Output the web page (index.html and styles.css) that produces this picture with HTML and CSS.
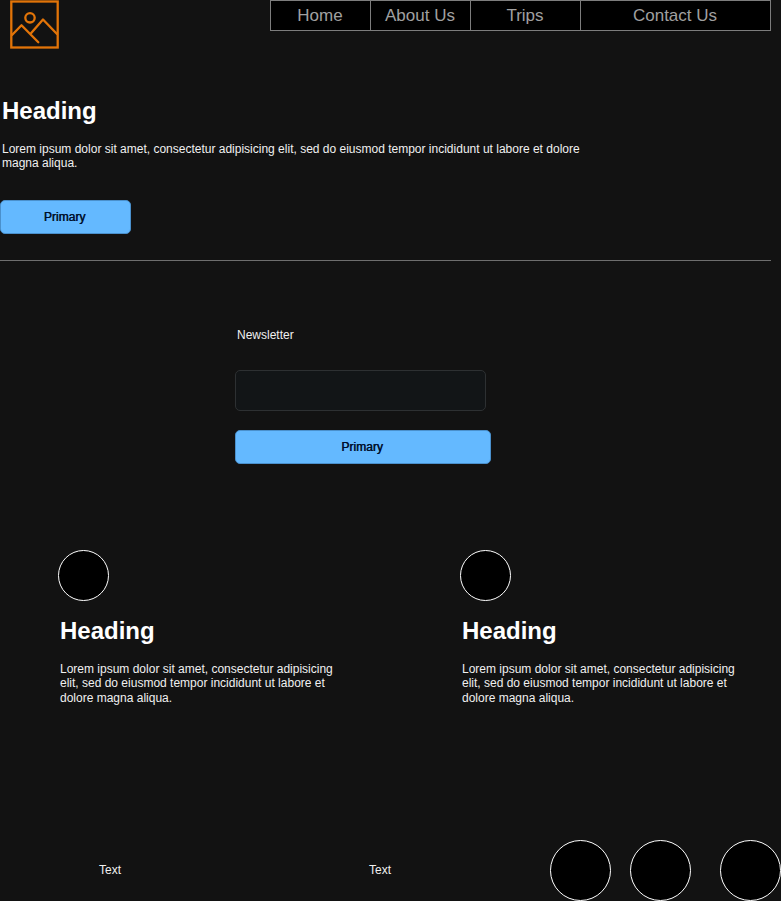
FILE: index.html
```html
<!DOCTYPE html>
<html lang="en">
<head>
<meta charset="utf-8">
<title>Trips</title>
<link rel="stylesheet" href="styles.css">
</head>
<body>
<header class="header">
  <svg class="logo" viewBox="0 0 50 50" fill="none" stroke="#e27408" stroke-width="2.3" stroke-linecap="round" stroke-linejoin="round">
    <rect x="1.3" y="1.5" width="46.4" height="46" stroke-linejoin="miter"/>
    <circle cx="20" cy="17.8" r="4.7"/>
    <path d="M2 35L11.5 25.3L28.3 42.3M21 33.3L33 19.5L47 34"/>
  </svg>
  <nav class="nav">
    <a>Home</a><a>About Us</a><a>Trips</a><a>Contact Us</a>
  </nav>
</header>
<section class="hero">
  <h1>Heading</h1>
  <p>Lorem ipsum dolor sit amet, consectetur adipisicing elit, sed do eiusmod tempor incididunt ut labore et dolore magna aliqua.</p>
  <button class="button">Primary</button>
</section>
<form class="newsletter">
  <label for="email">Newsletter</label>
  <input id="email" type="text">
  <button class="button" type="button">Primary</button>
</form>
<section class="cards">
  <article class="card">
    <div class="circle"></div>
    <h2>Heading</h2>
    <p>Lorem ipsum dolor sit amet, consectetur adipisicing elit, sed do eiusmod tempor incididunt ut labore et dolore magna aliqua.</p>
  </article>
  <article class="card">
    <div class="circle"></div>
    <h2>Heading</h2>
    <p>Lorem ipsum dolor sit amet, consectetur adipisicing elit, sed do eiusmod tempor incididunt ut labore et dolore magna aliqua.</p>
  </article>
</section>
<footer class="footer">
  <span class="footer-text">Text</span>
  <span class="footer-text">Text</span>
  <div class="socials">
    <div class="circle"></div>
    <div class="circle"></div>
    <div class="circle"></div>
  </div>
</footer>
</body>
</html>
```
FILE: styles.css
```css
* { box-sizing: border-box; }

body {
  margin: 0;
  height: 901px;
  overflow: hidden;
  display: flex;
  flex-direction: column;
  background: #121212;
  color: #f0f0f0;
  font: 12px/14.4px "Liberation Sans", Arial, sans-serif;
}

h1, h2, p { margin: 0; }

h1, h2 {
  color: #fff;
  font-size: 24px;
  line-height: 29px;
  padding-left: 2px;
}

.header {
  display: flex;
  justify-content: space-between;
  align-items: flex-start;
  height: 96px;
  padding: 0 10px;
}

.logo { width: 50px; height: 50px; }

.nav {
  display: grid;
  grid-template-columns: 101px 100px 110px 190px;
  height: 31px;
  border: solid #7d7d7d;
  border-width: 1px 0;
  background: #000;
  color: #a0a0a0;
  font-size: 17px;
  line-height: 29px;
  text-align: center;
}

.nav a {
  padding-right: 1px;
  border-right: 1px solid #7d7d7d;
}
.nav a:first-child { border-left: 1px solid #7d7d7d; }

.hero {
  width: 771px;
  height: 165px;
  border-bottom: 1px solid #6e6e6e;
}

.hero p {
  width: 590px;
  margin-top: 17px;
  padding-left: 2px;
}

.button {
  display: block;
  width: 131px;
  height: 34px;
  padding: 0 2px 0 0;
  border: 1px solid #4a90cc;
  border-radius: 5px;
  background: #64b9ff;
  color: #00102c;
  font: inherit;
  text-shadow: 0.5px 0 #00102c;
}

.hero .button { margin-top: 29px; }

.newsletter {
  display: flex;
  flex-direction: column;
  width: 256px;
  margin: 67px 0 0 235px;
}

.newsletter label { padding-left: 2px; }

.newsletter input {
  width: 251px;
  height: 41px;
  margin: 28px 0 19px;
  border: 1px solid #2d3032;
  border-radius: 5px;
  background: #121517;
}

.newsletter .button { width: 256px; }

.cards {
  display: grid;
  grid-template-columns: 280px 280px;
  gap: 122px;
  margin: 85.6px 0 0 58px;
}

.card h2 { margin: 15px 0 17px; }
.card p { padding-left: 2px; }

.circle {
  width: 51px;
  height: 51px;
  border: 1px solid #fff;
  border-radius: 50%;
  background: #000;
}

.footer {
  display: grid;
  grid-template-columns: 220px 320px 231px;
  align-items: center;
  height: 61px;
  margin-top: auto;
  padding-left: 10px;
}

.footer-text {
  padding-right: 20px;
  text-align: center;
}

.socials { display: flex; }
.socials .circle { width: 61px; height: 61px; margin-right: 19px; }
.socials .circle:last-child { margin: 0 0 0 10px; }
```
